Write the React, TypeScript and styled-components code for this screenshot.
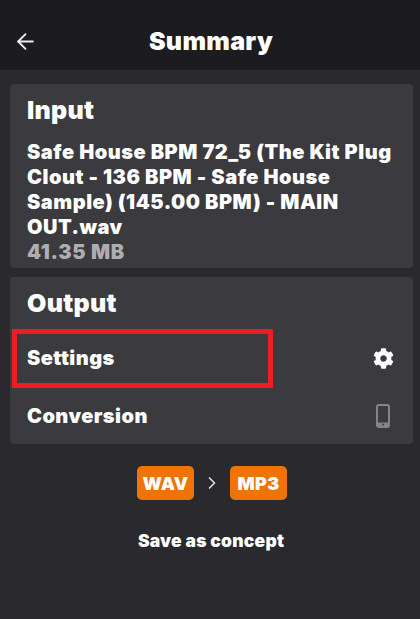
import React from 'react'
import styled, { createGlobalStyle } from 'styled-components'
import { ArrowLeft, ChevronRight } from 'lucide-react'
import { FaCog } from 'react-icons/fa'

const GlobalStyle = createGlobalStyle`
    html, body {
        margin: 0;
        padding: 0;
        background: #2a292d;
    }
    * {
        box-sizing: border-box;
    }
`

const Root = styled.div`
    width: 420px;
    height: 619px;
    overflow: hidden;
    background: #2a292d;
    color: #fff;
    font-family: Inter, "Liberation Sans", sans-serif;
`

const Header = styled.div`
    height: 70px;
    background: #1c1b1f;
    display: grid;
    grid-template-columns: 50px 1fr 50px;
    align-items: center;
    padding: 12px 11px 0 13px;
`

const BackButton = styled.div`
    display: flex;
    align-items: center;
    color: #eee;
`

const Title = styled.h1`
    margin: 0;
    font-size: 25px;
    letter-spacing: 0.3px;
    font-weight: 900;
    text-align: center;
`

const Content = styled.div`
    padding: 14px 7px 0 10px;
    display: flex;
    flex-direction: column;
    gap: 9px;
`

const Card = styled.section`
    background: #3b3a3e;
    border-radius: 4px;
    padding: 0 17px;
`

const InputCard = styled(Card)`
    height: 184px;
    padding-top: 11px;
`

const OutputCard = styled(Card)`
    height: 167px;
    padding-top: 11px;
    position: relative;
`

const CardTitle = styled.h2`
    margin: 0;
    font-size: 25px;
    letter-spacing: 0.3px;
    line-height: 30px;
    font-weight: 900;
`

const FileName = styled.div`
    margin-top: 15px;
    font-size: 20px;
    letter-spacing: 0.53px;
    line-height: 25px;
    font-weight: 900;
`

const FileSize = styled.div`
    font-size: 20px;
    letter-spacing: 0.7px;
    line-height: 24px;
    font-weight: 900;
    color: #aeadaf;
`

const Row = styled.div`
    display: flex;
    justify-content: space-between;
    align-items: center;
    height: 58px;
    font-size: 20px;
    letter-spacing: 0.45px;
    font-weight: 900;
`

const RowIcon = styled.span<{ $muted?: boolean }>`
    display: flex;
    color: ${props => (props.$muted ? '#858487' : '#fff')};
    margin-right: ${props => (props.$muted ? '5px' : '2px')};
`

const Rows = styled.div`
    margin-top: 11px;
`

const Highlight = styled.div`
    position: absolute;
    left: 2px;
    top: 52px;
    width: 261px;
    height: 59px;
    border: 5px solid #ee1c25;
`

const Formats = styled.div`
    margin-top: 22px;
    padding-left: 4px;
    display: flex;
    justify-content: center;
    align-items: center;
    gap: 8px;
`

const Badge = styled.div`
    width: 57px;
    height: 34px;
    border-radius: 5px;
    background: #ef7405;
    display: flex;
    align-items: center;
    justify-content: center;
    font-size: 18px;
    letter-spacing: 0.3px;
    font-weight: 900;
`

const Arrow = styled.div`
    display: flex;
    color: #ddd;
`

const SaveLink = styled.div`
    margin-top: 30px;
    padding-left: 2px;
    text-align: center;
    font-size: 17.5px;
    letter-spacing: 0.2px;
    line-height: 22px;
    font-weight: 900;
`

const PhoneIcon = () => (
    <svg width="16" height="26" viewBox="0 0 16 26" fill="none">
        <rect x="2" y="2" width="12" height="22" rx="2" stroke="currentColor" strokeWidth="2" />
        <rect x="2" y="19.5" width="12" height="4" fill="currentColor" />
        <circle cx="8" cy="21.5" r="1" fill="#3b3a3e" />
    </svg>
)

export default function App() {
    return (
        <Root>
            <GlobalStyle />
            <Header>
                <BackButton>
                    <ArrowLeft size={25} strokeWidth={1.8} />
                </BackButton>
                <Title>Summary</Title>
            </Header>
            <Content>
                <InputCard>
                    <CardTitle>Input</CardTitle>
                    <FileName>
                        Safe House BPM 72_5 (The Kit Plug
                        <br />
                        Clout - 136 BPM - Safe House
                        <br />
                        Sample) (145.00 BPM) - MAIN
                        <br />
                        OUT.wav
                    </FileName>
                    <FileSize>41.35 MB</FileSize>
                </InputCard>
                <OutputCard>
                    <CardTitle>Output</CardTitle>
                    <Rows>
                        <Row>
                            Settings
                            <RowIcon>
                                <FaCog size={21} />
                            </RowIcon>
                        </Row>
                        <Row>
                            Conversion
                            <RowIcon $muted>
                                <PhoneIcon />
                            </RowIcon>
                        </Row>
                    </Rows>
                    <Highlight />
                </OutputCard>
            </Content>
            <Formats>
                <Badge>WAV</Badge>
                <Arrow>
                    <ChevronRight size={20} strokeWidth={2} />
                </Arrow>
                <Badge>MP3</Badge>
            </Formats>
            <SaveLink>Save as concept</SaveLink>
        </Root>
    )
}
